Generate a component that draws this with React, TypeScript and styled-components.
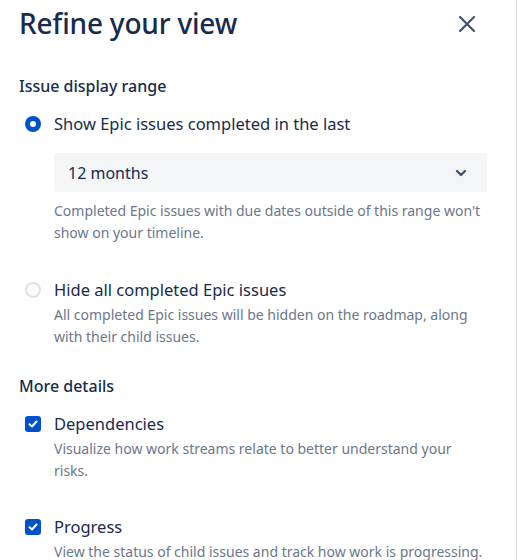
import * as React from 'react';
import styled, { createGlobalStyle } from 'styled-components';

const color = {
  navy: '#172b4d',
  muted: '#6b778c',
  icon: '#42526e',
  blue: '#0052cc',
  field: '#f4f5f7',
  line: '#e2e2e2'
};

const GlobalStyle = createGlobalStyle`
  body {
    margin: 0;
    background: #fff;
    font-family: "Noto Sans", "Open Sans", sans-serif;
    color: ${color.navy};
  }
`;

const Panel = styled.div`
  box-sizing: border-box;
  width: 517px;
  height: 560px;
  padding: 0 30px 0 19px;
  border-right: 1px solid ${color.line};
  overflow: hidden;
`;

const Header = styled.div`
  display: flex;
  align-items: center;
  justify-content: space-between;
  height: 46px;
  margin-right: -1px;
`;

const Title = styled.h1`
  margin: 0;
  font-size: 28px;
  line-height: 46px;
  font-weight: 500;
  letter-spacing: -0.2px;
`;

const CloseButton = styled.button`
  display: flex;
  align-items: center;
  justify-content: center;
  width: 40px;
  height: 40px;
  margin-top: 2px;
  padding: 0;
  border: 0;
  background: none;
  color: ${color.icon};
  cursor: pointer;
`;

const SectionTitle = styled.h2<{ $gap: number }>`
  margin: ${p => p.$gap}px 0 0;
  font-size: 16px;
  line-height: 24px;
  font-weight: 500;
`;

const OptionRow = styled.label<{ $gap: number }>`
  display: grid;
  grid-template-columns: 35px 1fr;
  align-items: center;
  margin-top: ${p => p.$gap}px;
  font-size: 16.5px;
  line-height: 24px;
  cursor: pointer;
`;

const Radio = styled.span<{ $on?: boolean }>`
  box-sizing: border-box;
  display: block;
  width: 16px;
  height: 16px;
  margin-left: 6px;
  border-radius: 50%;
  background: ${p => (p.$on ? color.blue : '#fafbfc')};
  border: ${p => (p.$on ? 'none' : '2px solid #dfe1e6')};
  position: relative;
  &::after {
    content: '';
    display: ${p => (p.$on ? 'block' : 'none')};
    position: absolute;
    left: 5px;
    top: 5px;
    width: 6px;
    height: 6px;
    border-radius: 50%;
    background: #fff;
  }
`;

const Check = styled.span`
  display: flex;
  align-items: center;
  justify-content: center;
  width: 16px;
  height: 16px;
  margin-left: 6px;
  border-radius: 3px;
  background: ${color.blue};
`;

const Indented = styled.div<{ $gap: number }>`
  margin: ${p => p.$gap}px -1px 0 35px;
`;

const Select = styled.div`
  display: flex;
  align-items: center;
  justify-content: space-between;
  height: 39px;
  padding: 0 20px 0 14px;
  border-radius: 3px;
  background: ${color.field};
  font-size: 16px;
`;

const Help = styled.p<{ $gap: number }>`
  margin: ${p => p.$gap}px 0 0 35px;
  font-size: 14px;
  line-height: 21.5px;
  color: ${color.muted};
`;

const CloseIcon = () => (
  <svg width="18" height="18" viewBox="0 0 18 18">
    <path d="M2 2 L16 16 M16 2 L2 16" stroke="currentColor" strokeWidth="2.2" strokeLinecap="round" />
  </svg>
);

const Chevron = () => (
  <svg width="12" height="8" viewBox="0 0 12 8">
    <path d="M2 2 L6 6 L10 2" fill="none" stroke={color.icon} strokeWidth="2.4" strokeLinecap="round" strokeLinejoin="round" />
  </svg>
);

const Tick = () => (
  <svg width="10" height="8" viewBox="0 0 10 8">
    <path d="M1.5 4.2 L4 6.5 L8.5 1.5" fill="none" stroke="#fff" strokeWidth="2" strokeLinecap="round" strokeLinejoin="round" />
  </svg>
);

export default function App() {
  return (
    <Panel>
      <GlobalStyle />
      <Header>
        <Title>Refine your view</Title>
        <CloseButton aria-label="Close">
          <CloseIcon />
        </CloseButton>
      </Header>

      <SectionTitle $gap={28}>Issue display range</SectionTitle>
      <OptionRow $gap={14}>
        <Radio $on />
        <span>Show Epic issues completed in the last</span>
      </OptionRow>
      <Indented $gap={17}>
        <Select>
          <span>12 months</span>
          <Chevron />
        </Select>
      </Indented>
      <Help $gap={8}>
        Completed Epic issues with due dates outside of this range won't show on your timeline.
      </Help>

      <OptionRow $gap={35}>
        <Radio />
        <span>Hide all completed Epic issues</span>
      </OptionRow>
      <Help $gap={2}>
        All completed Epic issues will be hidden on the roadmap, along with their child issues.
      </Help>

      <SectionTitle $gap={27}>More details</SectionTitle>
      <OptionRow $gap={14}>
        <Check>
          <Tick />
        </Check>
        <span>Dependencies</span>
      </OptionRow>
      <Help $gap={2}>Visualize how work streams relate to better understand your risks.</Help>

      <OptionRow $gap={34}>
        <Check>
          <Tick />
        </Check>
        <span>Progress</span>
      </OptionRow>
      <Help $gap={2}>View the status of child issues and track how work is progressing.</Help>
    </Panel>
  );
}
